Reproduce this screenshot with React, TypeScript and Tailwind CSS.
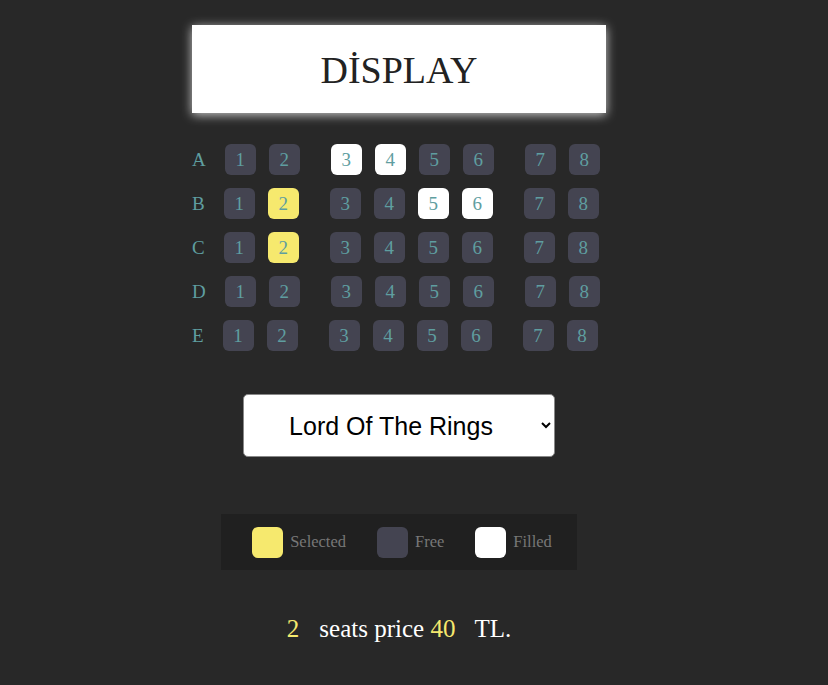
import React from "react";

type S = "free" | "sel" | "fill";

const rows: { label: string; seats: S[] }[] = [
  { label: "A", seats: ["free", "free", "fill", "fill", "free", "free", "free", "free"] },
  { label: "B", seats: ["free", "sel", "free", "free", "fill", "fill", "free", "free"] },
  { label: "C", seats: ["free", "sel", "free", "free", "free", "free", "free", "free"] },
  { label: "D", seats: ["free", "free", "free", "free", "free", "free", "free", "free"] },
  { label: "E", seats: ["free", "free", "free", "free", "free", "free", "free", "free"] },
];

const serif = { fontFamily: '"Liberation Serif", "Times New Roman", serif' };

function Seat({ s, n }: { s: S; n: number }) {
  const bg = s === "sel" ? "bg-[#f6e96e]" : s === "fill" ? "bg-white" : "bg-[#444451]";
  const extra = n === 2 || n === 6 ? "mr-[31px]" : "mr-[13px]";
  return (
    <div
      className={`${bg} ${extra} shrink-0 w-[31px] h-[31px] rounded-[6px] flex items-center justify-center text-[19px] text-[#5f9ea0] leading-none`}
    >
      {n}
    </div>
  );
}

export default function App() {
  return (
    <div className="min-h-[685px] w-full bg-[#282828] flex flex-col items-center pr-[30px]" style={serif}>
      <div className="mt-[25px] w-[414px] h-[88px] bg-white flex items-center justify-center pt-[3px] text-[38px] text-[#222] shadow-[0_2px_10px_rgba(255,255,255,0.75)]">
        DİSPLAY
      </div>
      <div className="w-[414px] mt-[31px] flex flex-col gap-[13px]">
        {rows.map((r) => (
          <div key={r.label} className="flex items-center">
            <div className="shrink-0 text-[19px] text-[#5f9ea0] mr-[19px] leading-none">{r.label}</div>
            {r.seats.map((s, i) => (
              <Seat key={i} s={s} n={i + 1} />
            ))}
          </div>
        ))}
      </div>
      <select
        defaultValue="lotr"
        className="mt-[43px] w-[312px] h-[63px] bg-white text-black rounded-[5px] border border-[#888] text-[25px] text-center pl-3 pr-4"
        style={{ fontFamily: '"Liberation Sans", Arial, sans-serif', textAlignLast: "center" }}
      >
        <option value="lotr">Lord Of The Rings</option>
      </select>
      <div className="mt-[57px] w-[356px] h-[56px] bg-[#202020] flex items-center justify-center pl-[6px] gap-[31px] text-[16.5px] text-[#777]">
        <div className="flex items-center gap-[7px]">
          <div className="w-[31px] h-[31px] rounded-[6px] bg-[#f6e96e]" />
          <span>Selected</span>
        </div>
        <div className="flex items-center gap-[7px]">
          <div className="w-[31px] h-[31px] rounded-[6px] bg-[#444451]" />
          <span>Free</span>
        </div>
        <div className="flex items-center gap-[7px]">
          <div className="w-[31px] h-[31px] rounded-[6px] bg-white" />
          <span>Filled</span>
        </div>
      </div>
      <div className="mt-[46px] text-[25px] text-white leading-none">
        <span className="text-[#f6e96e] mr-[20px]">2</span>
        <span>seats price </span>
        <span className="text-[#f6e96e] mr-[19px]">40</span>
        <span>TL.</span>
      </div>
    </div>
  );
}
